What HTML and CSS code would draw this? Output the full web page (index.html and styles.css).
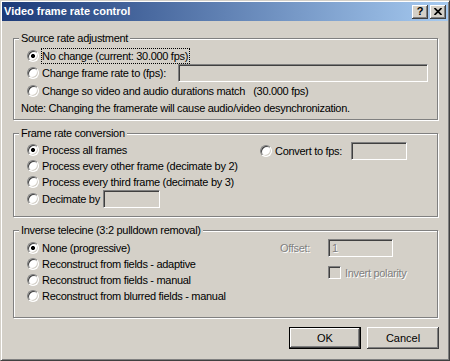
FILE: index.html
```html
<!DOCTYPE html>
<html lang="en">
<head>
    <meta charset="UTF-8">
    <meta name="viewport" content="width=device-width, initial-scale=1.0">
    <title>Video frame rate control</title>
    <link rel="stylesheet" href="styles.css">
</head>
<body>
    <div class="window">
        <div class="titlebar">
            <span class="title">Video frame rate control</span>
            <div class="caption-buttons">
                <button class="cap-btn cap-help">?</button>
                <button class="cap-btn">
                    <svg width="8" height="7" viewBox="0 0 8 7"><path d="M0.5 0L7.5 7M7.5 0L0.5 7" stroke="#000" stroke-width="1.7"/></svg>
                </button>
            </div>
        </div>
        <div class="dialog-body">
            <div class="group group-source">
                <div class="group-title">Source rate adjustment</div>
                <div class="option first"><span class="radio checked"></span><span class="focus">No change (current: 30.000 fps)</span></div>
                <div class="option option-edit"><span class="radio"></span>Change frame rate to (fps):<span class="edit edit-fps"></span></div>
                <div class="option"><span class="radio"></span>Change so video and audio durations match&nbsp;&nbsp; (30.000 fps)</div>
                <p class="note">Note: Changing the framerate will cause audio/video desynchronization.</p>
            </div>

            <div class="group group-conversion">
                <div class="group-title">Frame rate conversion</div>
                <div class="columns">
                    <div class="col-left">
                        <div class="option first"><span class="radio checked"></span>Process all frames</div>
                        <div class="option"><span class="radio"></span>Process every other frame (decimate by 2)</div>
                        <div class="option"><span class="radio"></span>Process every third frame (decimate by 3)</div>
                        <div class="option option-edit"><span class="radio"></span><span class="label-decimate">Decimate by</span><span class="edit edit-decimate"></span></div>
                    </div>
                    <div class="col-right">
                        <div class="option option-edit"><span class="radio"></span><span class="label-convert">Convert to fps:</span><span class="edit edit-convert"></span></div>
                    </div>
                </div>
            </div>

            <div class="group group-telecine">
                <div class="group-title">Inverse telecine (3:2 pulldown removal)</div>
                <div class="columns">
                    <div class="col-left telecine-left">
                        <div class="option first"><span class="radio checked"></span>None (progressive)</div>
                        <div class="option"><span class="radio"></span>Reconstruct from fields - adaptive</div>
                        <div class="option"><span class="radio"></span>Reconstruct from fields - manual</div>
                        <div class="option"><span class="radio"></span>Reconstruct from blurred fields - manual</div>
                    </div>
                    <div class="telecine-right">
                        <div class="offset-row">
                            <span class="disabled offset-label">Offset:</span>
                            <span class="edit edit-offset">1</span>
                        </div>
                        <div class="check-row">
                            <span class="checkbox"></span>
                            <span class="disabled">Invert polarity</span>
                        </div>
                    </div>
                </div>
            </div>

            <div class="buttons">
                <button class="btn btn-default">OK</button>
                <button class="btn">Cancel</button>
            </div>
        </div>
    </div>
</body>
</html>
```

FILE: styles.css
```css
* {
    box-sizing: border-box;
    margin: 0;
    padding: 0;
}
body {
    font-family: "Liberation Sans", Arial, sans-serif;
    font-size: 11px;
    letter-spacing: -0.3px;
    color: #000;
    background-color: #d4d0c8;
    width: 450px;
    height: 361px;
    overflow: hidden;
}
.window {
    width: 450px;
    height: 361px;
    background-color: #d4d0c8;
    border: 1px solid;
    border-color: #d4d0c8 #404040 #404040 #d4d0c8;
    box-shadow: inset 1px 1px 0 #fff, inset -1px -1px 0 #808080;
    padding: 1px;
}
.titlebar {
    height: 19px;
    background: linear-gradient(90deg, #1c3a78, #a6caf0);
    display: flex;
    align-items: center;
    justify-content: space-between;
    padding: 0 2px;
}
.title {
    color: #fff;
    font-weight: bold;
    letter-spacing: 0;
    line-height: 13px;
}
.caption-buttons {
    display: flex;
    gap: 2px;
}
.cap-btn {
    width: 16px;
    height: 14px;
    border: none;
    background-color: #d4d0c8;
    box-shadow: inset -1px -1px 0 #404040, inset 1px 1px 0 #fff, inset -2px -2px 0 #808080;
    display: flex;
    align-items: center;
    justify-content: center;
    font-family: "Liberation Sans", Arial, sans-serif;
    font-weight: bold;
    font-size: 11px;
    line-height: 11px;
    color: #000;
    padding-bottom: 1px;
}
.dialog-body {
    padding: 17px 10px 0 11px;
}
.group {
    border: 1px solid #808080;
    box-shadow: 1px 1px 0 #fff, inset 1px 1px 0 #fff;
    padding: 0 9px 0 13px;
}
.group-title {
    width: fit-content;
    margin: -7px 0 0 -8px;
    padding: 0 2px;
    line-height: 13px;
    background-color: #d4d0c8;
}
.group-source {
    padding-bottom: 4px;
}
.group-conversion {
    margin-top: 13px;
    padding-bottom: 8px;
}
.group-telecine {
    margin-top: 13px;
    padding-bottom: 13px;
}
.option {
    display: flex;
    align-items: center;
    height: 16px;
    white-space: nowrap;
}
.group-source .option {
    height: 17px;
}
.option.first {
    margin-top: 2px;
}
.group-telecine .option.first {
    margin-top: 3px;
}
.group-source .option-edit,
.option-edit {
    height: 18px;
}
.radio {
    flex: none;
    width: 12px;
    height: 12px;
    margin-right: 3px;
    border-radius: 50%;
    border: 1px solid;
    border-color: #808080 #fff #fff #808080;
    box-shadow: inset 1px 1px 0 #404040, inset -1px -1px 0 #d4d0c8;
    background: #fff;
}
.radio.checked {
    background: radial-gradient(circle, #000 0, #000 1.6px, #fff 2.4px);
}
.focus {
    border: 1px dotted #000;
    margin-left: -1px;
    padding: 0 1px 0 0;
    line-height: 14px;
}
.edit {
    display: inline-block;
    height: 18px;
    background-color: #d4d0c8;
    border: 1px solid;
    border-color: #808080 #fff #fff #808080;
    box-shadow: inset 1px 1px 0 #404040, inset -1px -1px 0 #d4d0c8;
    color: #808080;
    text-shadow: 1px 1px 0 #fff;
    padding: 0 3px;
    line-height: 16px;
}
.edit-fps {
    width: 250px;
    margin-left: auto;
}
.label-decimate {
    width: 61px;
}
.edit-decimate {
    width: 57px;
}
.label-convert {
    width: 76px;
}
.edit-convert {
    width: 56px;
}
.note {
    margin: 3px 0 0 -6px;
    line-height: 13px;
}
.columns {
    display: flex;
}
.col-left {
    width: 233px;
}
.telecine-left {
    width: 253px;
}
.col-right {
    padding-top: 2px;
}
.telecine-right {
    padding-top: 2px;
}
.offset-row {
    display: flex;
    align-items: center;
}
.offset-label {
    width: 48px;
}
.edit-offset {
    width: 65px;
}
.check-row {
    display: flex;
    align-items: center;
    margin: 9px 0 0 48px;
}
.checkbox {
    width: 13px;
    height: 13px;
    margin-right: 4px;
    background-color: #d4d0c8;
    border: 1px solid;
    border-color: #808080 #fff #fff #808080;
    box-shadow: inset 1px 1px 0 #404040, inset -1px -1px 0 #d4d0c8;
}
.disabled {
    color: #808080;
    text-shadow: 1px 1px 0 #fff;
}
.buttons {
    display: flex;
    justify-content: flex-end;
    gap: 6px;
    margin: 9px -1px 0 0;
}
.btn {
    width: 72px;
    height: 22px;
    border: none;
    background-color: #d4d0c8;
    box-shadow: inset -1px -1px 0 #404040, inset 1px 1px 0 #fff, inset -2px -2px 0 #808080;
    font-family: "Liberation Sans", Arial, sans-serif;
    font-size: 11px;
    color: #000;
}
.btn-default {
    border: 1px solid #000;
}
```
